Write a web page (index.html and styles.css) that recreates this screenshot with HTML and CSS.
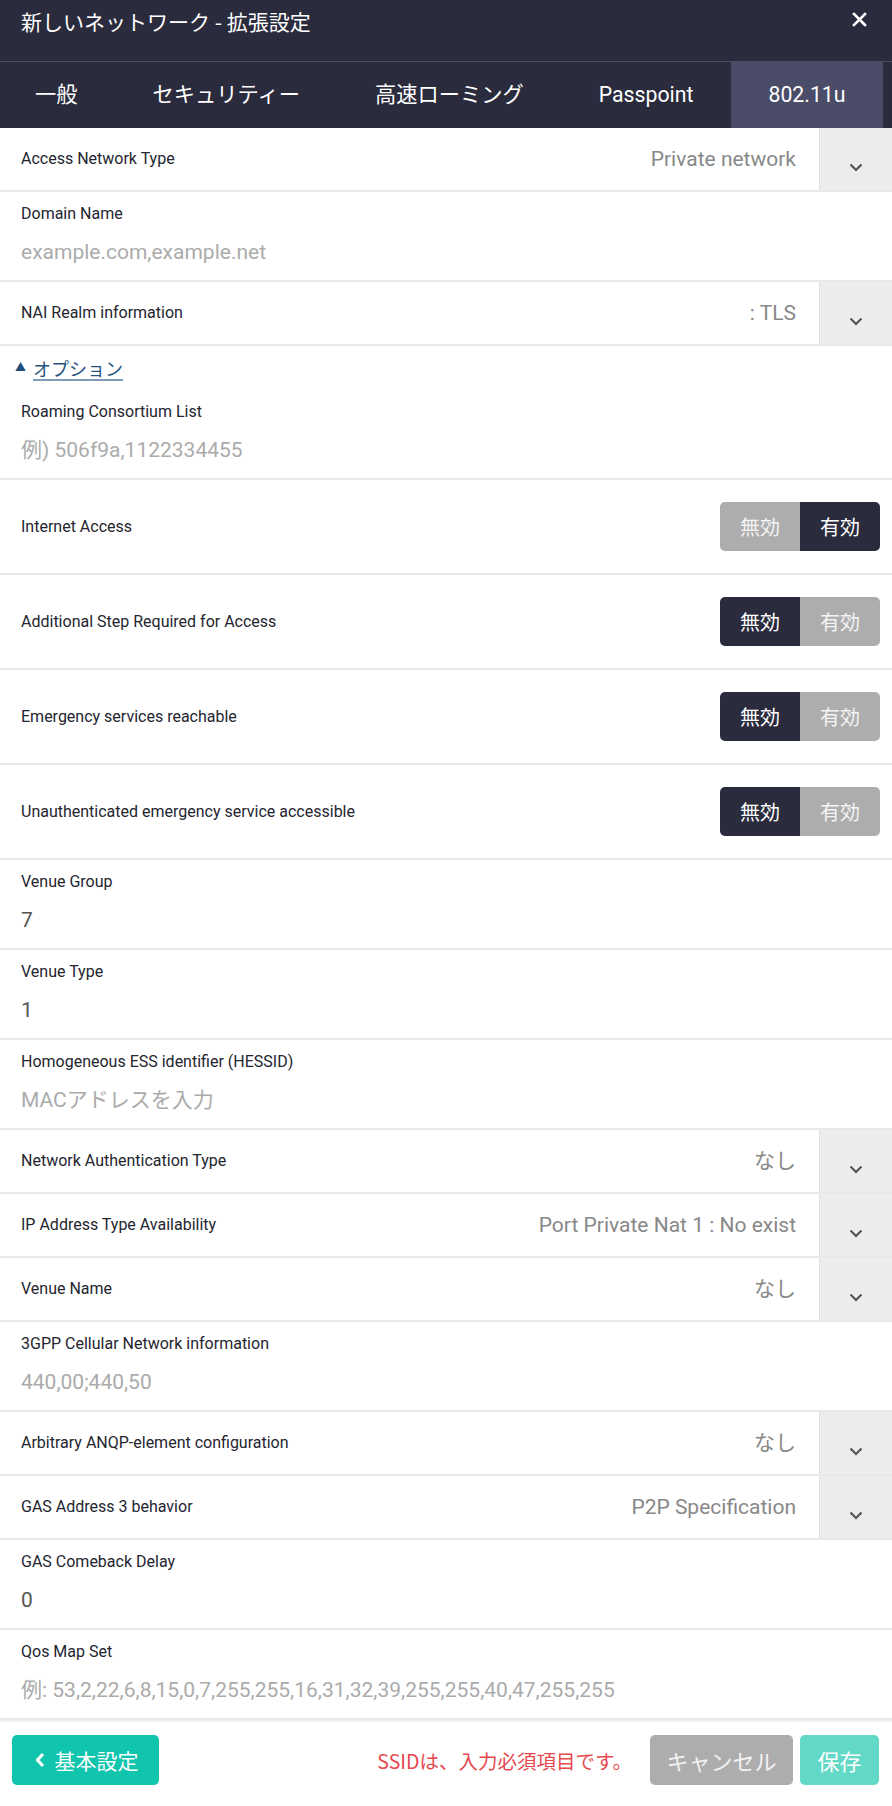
FILE: index.html
```html
<!DOCTYPE html>
<html lang="ja">
<head>
<meta charset="utf-8">
<title>新しいネットワーク - 拡張設定</title>
<link rel="stylesheet" href="styles.css">
</head>
<body>
<div class="modal">
  <header class="titlebar">
    <h1 class="title">新しいネットワーク - 拡張設定</h1>
    <span class="close"><svg width="15" height="15" viewBox="0 0 15 15"><path d="M2 2 L13 13 M13 2 L2 13" stroke="#fff" stroke-width="2.6" stroke-linecap="square"/></svg></span>
  </header>
  <nav class="tabs">
    <div class="tab">一般</div>
    <div class="tab">セキュリティー</div>
    <div class="tab">高速ローミング</div>
    <div class="tab">Passpoint</div>
    <div class="tab active">802.11u</div>
  </nav>

  <div class="form">
    <div class="row select">
      <span class="label">Access Network Type</span>
      <span class="value">Private network</span>
      <span class="caret"><svg width="14" height="9" viewBox="0 0 14 9"><polyline points="1.5,1.5 7,7 12.5,1.5" fill="none" stroke="#555" stroke-width="2.2"/></svg></span>
    </div>
    <div class="row field">
      <div class="label">Domain Name</div>
      <div class="input ph">example.com,example.net</div>
    </div>
    <div class="row select">
      <span class="label">NAI Realm information</span>
      <span class="value">: TLS</span>
      <span class="caret"><svg width="14" height="9" viewBox="0 0 14 9"><polyline points="1.5,1.5 7,7 12.5,1.5" fill="none" stroke="#555" stroke-width="2.2"/></svg></span>
    </div>
    <div class="options"><span class="tri">▲</span><a class="optlink">オプション</a></div>
    <div class="row field">
      <div class="label">Roaming Consortium List</div>
      <div class="input ph">例) 506f9a,1122334455</div>
    </div>
    <div class="row toggle-row">
      <span class="label">Internet Access</span>
      <div class="toggle"><span class="opt off">無効</span><span class="opt on">有効</span></div>
    </div>
    <div class="row toggle-row">
      <span class="label">Additional Step Required for Access</span>
      <div class="toggle"><span class="opt on">無効</span><span class="opt off">有効</span></div>
    </div>
    <div class="row toggle-row">
      <span class="label">Emergency services reachable</span>
      <div class="toggle"><span class="opt on">無効</span><span class="opt off">有効</span></div>
    </div>
    <div class="row toggle-row">
      <span class="label">Unauthenticated emergency service accessible</span>
      <div class="toggle"><span class="opt on">無効</span><span class="opt off">有効</span></div>
    </div>
    <div class="row field">
      <div class="label">Venue Group</div>
      <div class="input val">7</div>
    </div>
    <div class="row field">
      <div class="label">Venue Type</div>
      <div class="input val">1</div>
    </div>
    <div class="row field">
      <div class="label">Homogeneous ESS identifier (HESSID)</div>
      <div class="input ph">MACアドレスを入力</div>
    </div>
    <div class="row select">
      <span class="label">Network Authentication Type</span>
      <span class="value">なし</span>
      <span class="caret"><svg width="14" height="9" viewBox="0 0 14 9"><polyline points="1.5,1.5 7,7 12.5,1.5" fill="none" stroke="#555" stroke-width="2.2"/></svg></span>
    </div>
    <div class="row select">
      <span class="label">IP Address Type Availability</span>
      <span class="value">Port Private Nat 1 : No exist</span>
      <span class="caret"><svg width="14" height="9" viewBox="0 0 14 9"><polyline points="1.5,1.5 7,7 12.5,1.5" fill="none" stroke="#555" stroke-width="2.2"/></svg></span>
    </div>
    <div class="row select">
      <span class="label">Venue Name</span>
      <span class="value">なし</span>
      <span class="caret"><svg width="14" height="9" viewBox="0 0 14 9"><polyline points="1.5,1.5 7,7 12.5,1.5" fill="none" stroke="#555" stroke-width="2.2"/></svg></span>
    </div>
    <div class="row field">
      <div class="label">3GPP Cellular Network information</div>
      <div class="input ph">440,00;440,50</div>
    </div>
    <div class="row select">
      <span class="label">Arbitrary ANQP-element configuration</span>
      <span class="value">なし</span>
      <span class="caret"><svg width="14" height="9" viewBox="0 0 14 9"><polyline points="1.5,1.5 7,7 12.5,1.5" fill="none" stroke="#555" stroke-width="2.2"/></svg></span>
    </div>
    <div class="row select">
      <span class="label">GAS Address 3 behavior</span>
      <span class="value">P2P Specification</span>
      <span class="caret"><svg width="14" height="9" viewBox="0 0 14 9"><polyline points="1.5,1.5 7,7 12.5,1.5" fill="none" stroke="#555" stroke-width="2.2"/></svg></span>
    </div>
    <div class="row field">
      <div class="label">GAS Comeback Delay</div>
      <div class="input val">0</div>
    </div>
    <div class="row field">
      <div class="label">Qos Map Set</div>
      <div class="input ph">例: 53,2,22,6,8,15,0,7,255,255,16,31,32,39,255,255,40,47,255,255</div>
    </div>
  </div>

  <footer class="footer">
    <button class="btn back"><svg width="10" height="16" viewBox="0 0 10 16"><polyline points="8,2 2.5,8 8,14" fill="none" stroke="#fff" stroke-width="3.2"/></svg><span>基本設定</span></button>
    <div class="footer-right">
      <span class="error">SSIDは、入力必須項目です。</span>
      <button class="btn cancel">キャンセル</button>
      <button class="btn save">保存</button>
    </div>
  </footer>
</div>
</body>
</html>
```

FILE: styles.css
```css
* { box-sizing: border-box; }
html, body { margin: 0; padding: 0; background: #fff; }
body {
  font-family: Roboto, "Noto Sans CJK JP", sans-serif;
  color: #333;
}
.modal { width: 892px; min-height: 1806px; display: flex; flex-direction: column; }

.titlebar {
  height: 62px;
  background: #2a2b3d;
  border-bottom: 1px solid #4b4d5f;
  display: flex;
  align-items: flex-start;
  justify-content: space-between;
  padding: 8px 25px 0 21px;
}
.title {
  margin: 0;
  font-size: 21px;
  font-weight: 400;
  line-height: 26px;
  color: #fff;
  font-family: "Noto Sans CJK JP", Roboto, sans-serif;
}
.close { display: flex; padding-top: 4px; }

.tabs {
  height: 66px;
  background: #2a2b3d;
  display: flex;
}
.tab {
  padding: 0 37.5px;
  line-height: 66px;
  font-size: 21.25px;
  color: #fff;
  font-weight: 400;
  white-space: nowrap;
}
.tab:first-child { padding-left: 35px; }
.tab.active { background: #4a4c68; }

.form { display: flex; flex-direction: column; }
.row { border-bottom: 2px solid #e8e8e8; }
.label {
  font-size: 16px;
  font-weight: 400;
  color: #24252f;
  line-height: 20px;
}

.select {
  height: 64px;
  display: flex;
  align-items: stretch;
}
.select .label { flex: 1; align-self: center; padding-left: 21px; }
.select .value {
  align-self: center;
  padding-right: 23px;
  font-size: 21px;
  color: #888;
  line-height: 28px;
}
.caret {
  width: 73px;
  background: #ececec;
  border-left: 1px solid #dedede;
  display: flex;
  align-items: center;
  justify-content: center;
  padding-top: 16px;
}

.field {
  height: 90px;
  padding: 12px 21px 0;
}
.field .input {
  margin-top: 14px;
  font-size: 21px;
  line-height: 28px;
}
.input.ph { color: #ababab; }
.input.val { color: #555; }

.options {
  height: 44px;
  display: flex;
  align-items: center;
  padding-left: 15px;
  gap: 7px;
}
.tri { font-size: 11px; color: #1f4f7a; line-height: 1; position: relative; top: -1px; }
.optlink {
  font-size: 18px;
  color: #24527e;
  text-decoration: underline;
  text-decoration-color: #7f9bbb;
  text-decoration-thickness: 1.5px;
  text-underline-offset: 3px;
  font-family: "Noto Sans CJK JP", sans-serif;
}

.toggle-row {
  height: 95px;
  display: flex;
  align-items: center;
  justify-content: space-between;
  padding: 0 12px 0 21px;
}
.toggle {
  display: flex;
  width: 160px;
  height: 49px;
  border-radius: 5px;
  overflow: hidden;
}
.opt {
  flex: 1;
  display: flex;
  align-items: center;
  justify-content: center;
  font-size: 20px;
  font-family: "Noto Sans CJK JP", sans-serif;
  color: #fff;
}
.opt.on { background: #2a2b3d; }
.opt.off { background: #adadad; color: #f4f4f4; }

.footer {
  flex: 1;
  border-top: 2px solid #f0f0f0;
  display: flex;
  align-items: flex-start;
  justify-content: space-between;
  padding: 13px 13px 0 12px;
}
.btn {
  border: none;
  height: 50px;
  border-radius: 5px;
  font-family: "Noto Sans CJK JP", sans-serif;
  font-size: 21px;
  color: #fff;
  display: flex;
  align-items: center;
  justify-content: center;
  padding: 0;
}
.back {
  width: 147px;
  background: #10c4ad;
  gap: 10px;
  padding-left: 2px;
}
.footer-right { display: flex; align-items: center; gap: 7px; }
.error {
  color: #e5484d;
  font-size: 19.5px;
  font-family: "Noto Sans CJK JP", sans-serif;
  margin-right: 11px;
}
.cancel { width: 143px; background: #adadad; color: #f2f2f2; font-size: 22px; }
.save { width: 79px; background: #62d8c6; font-size: 22px; }
```
